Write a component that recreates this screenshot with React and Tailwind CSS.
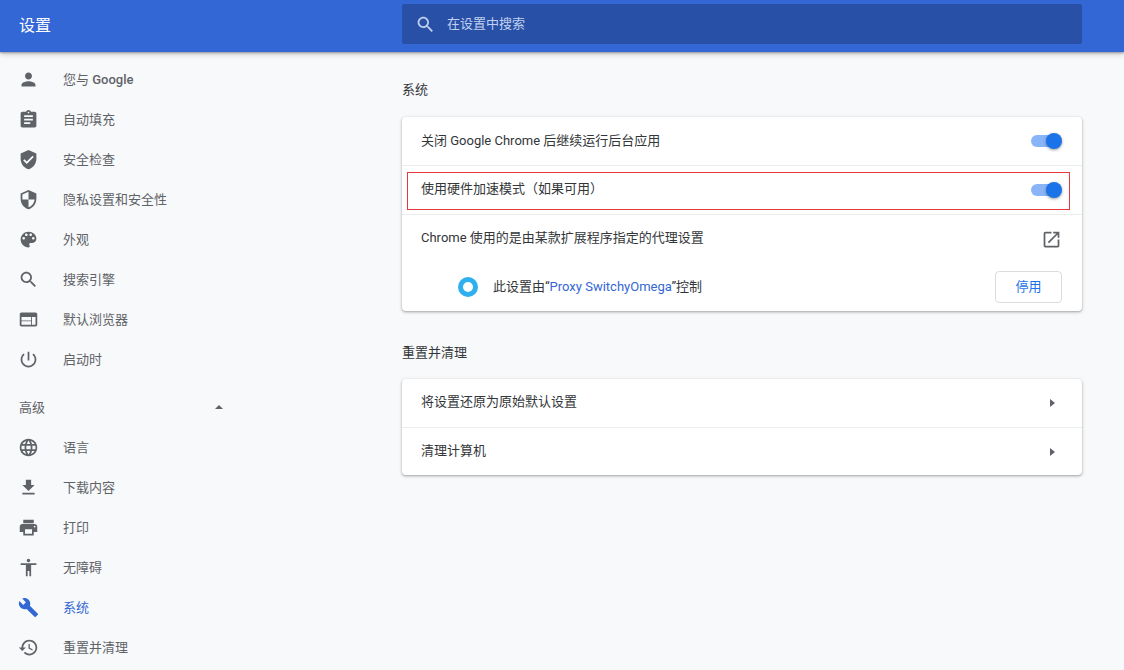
import React from "react";

const P = {
  person: "M12 12c2.21 0 4-1.79 4-4s-1.79-4-4-4-4 1.79-4 4 1.79 4 4 4zm0 2c-2.67 0-8 1.34-8 4v2h16v-2c0-2.66-5.33-4-8-4z",
  assignment: "M19 3h-4.18C14.4 1.84 13.3 1 12 1c-1.3 0-2.4.84-2.82 2H5c-1.1 0-2 .9-2 2v14c0 1.1.9 2 2 2h14c1.1 0 2-.9 2-2V5c0-1.1-.9-2-2-2zm-7 0c.55 0 1 .45 1 1s-.45 1-1 1-1-.45-1-1 .45-1 1-1zm2 14H7v-2h7v2zm3-4H7v-2h10v2zm0-4H7V7h10v2z",
  verified: "M12 1L3 5v6c0 5.55 3.84 10.74 9 12 5.16-1.26 9-6.45 9-12V5l-9-4zm-2 16l-4-4 1.41-1.41L10 14.17l6.59-6.59L18 9l-8 8z",
  security: "M12 1L3 5v6c0 5.55 3.84 10.74 9 12 5.16-1.26 9-6.45 9-12V5l-9-4zm0 10.99h7c-.53 4.12-3.28 7.79-7 8.94V12H5V6.3l7-3.11v8.8z",
  palette: "M12 3c-4.97 0-9 4.03-9 9s4.03 9 9 9c.83 0 1.5-.67 1.5-1.5 0-.39-.15-.74-.39-1.01-.23-.26-.38-.61-.38-.99 0-.83.67-1.5 1.5-1.5H16c2.76 0 5-2.24 5-5 0-4.42-4.03-8-9-8zm-5.5 9c-.83 0-1.5-.67-1.5-1.5S5.67 9 6.5 9 8 9.67 8 10.5 7.33 12 6.5 12zm3-4C8.67 8 8 7.33 8 6.5S8.67 5 9.5 5s1.5.67 1.5 1.5S10.33 8 9.5 8zm5 0c-.83 0-1.5-.67-1.5-1.5S13.67 5 14.5 5s1.5.67 1.5 1.5S15.33 8 14.5 8zm3 4c-.83 0-1.5-.67-1.5-1.5S16.67 9 17.5 9s1.5.67 1.5 1.5-.67 1.5-1.5 1.5z",
  search: "M15.5 14h-.79l-.28-.27C15.41 12.59 16 11.11 16 9.5 16 5.91 13.09 3 9.5 3S3 5.91 3 9.5 5.91 16 9.5 16c1.61 0 3.09-.59 4.23-1.57l.27.28v.79l5 4.99L20.49 19l-4.99-5zm-6 0C7.01 14 5 11.99 5 9.5S7.01 5 9.5 5 14 7.01 14 9.5 11.99 14 9.5 14z",
  web: "M20 4H4c-1.1 0-1.99.9-1.99 2L2 18c0 1.1.9 2 2 2h16c1.1 0 2-.9 2-2V6c0-1.1-.9-2-2-2zm-5 14H4v-4h11v4zm0-5H4V9h11v4zm5 5h-4V9h4v9z",
  power: "M13 3h-2v10h2V3zm4.83 2.17l-1.42 1.42C17.99 7.86 19 9.81 19 12c0 3.87-3.13 7-7 7s-7-3.13-7-7c0-2.19 1.01-4.14 2.58-5.42L6.17 5.17C4.23 6.82 3 9.26 3 12c0 4.97 4.03 9 9 9s9-4.03 9-9c0-2.74-1.23-5.18-3.17-6.83z",
  language: "M11.99 2C6.47 2 2 6.48 2 12s4.47 10 9.99 10C17.52 22 22 17.52 22 12S17.52 2 11.99 2zm6.93 6h-2.95c-.32-1.25-.78-2.45-1.38-3.56 1.84.63 3.37 1.91 4.33 3.56zM12 4.04c.83 1.2 1.48 2.53 1.91 3.96h-3.82c.43-1.43 1.08-2.76 1.91-3.96zM4.26 14C4.1 13.36 4 12.69 4 12s.1-1.36.26-2h3.38c-.08.66-.14 1.32-.14 2 0 .68.06 1.34.14 2H4.26zm.82 2h2.95c.32 1.25.78 2.45 1.38 3.56-1.84-.63-3.37-1.9-4.33-3.56zm2.95-8H5.08c.96-1.66 2.49-2.93 4.33-3.56C8.81 5.55 8.35 6.75 8.03 8zM12 19.96c-.83-1.2-1.48-2.53-1.91-3.96h3.82c-.43 1.43-1.08 2.76-1.91 3.96zM14.34 14H9.66c-.09-.66-.16-1.32-.16-2 0-.68.07-1.35.16-2h4.68c.09.65.16 1.32.16 2 0 .68-.07 1.34-.16 2zm.25 5.56c.6-1.11 1.06-2.31 1.38-3.56h2.95c-.96 1.65-2.49 2.93-4.33 3.56zM16.36 14c.08-.66.14-1.32.14-2 0-.68-.06-1.34-.14-2h3.38c.16.64.26 1.31.26 2s-.1 1.36-.26 2h-3.38z",
  download: "M19 9h-4V3H9v6H5l7 7 7-7zM5 18v2h14v-2H5z",
  print: "M19 8H5c-1.66 0-3 1.34-3 3v6h4v4h12v-4h4v-6c0-1.66-1.34-3-3-3zm-3 11H8v-5h8v5zm3-7c-.55 0-1-.45-1-1s.45-1 1-1 1 .45 1 1-.45 1-1 1zm-1-9H6v4h12V3z",
  access: "M12 2c1.1 0 2 .9 2 2s-.9 2-2 2-2-.9-2-2 .9-2 2-2zm9 7h-6v13h-2v-6h-2v6H9V9H3V7h18v2z",
  build: "M22.7 19l-9.1-9.1c.9-2.3.4-5-1.5-6.9-2-2-5-2.4-7.4-1.3L9 6 6 9 1.6 4.7C.4 7.1.9 10.1 2.9 12.1c1.9 1.9 4.6 2.4 6.9 1.5l9.1 9.1c.4.4 1 .4 1.4 0l2.3-2.3c.5-.4.5-1.1.1-1.4z",
  restore: "M13 3c-4.97 0-9 4.03-9 9H1l3.89 3.89.07.14L9 12H6c0-3.87 3.13-7 7-7s7 3.13 7 7-3.13 7-7 7c-1.93 0-3.68-.79-4.94-2.06l-1.42 1.42C8.27 19.99 10.51 21 13 21c4.97 0 9-4.03 9-9s-4.03-9-9-9zm-1 5v5l4.28 2.54.72-1.21-3.5-2.08V8H12z",
  open: "M19 19H5V5h7V3H5c-1.11 0-2 .9-2 2v14c0 1.1.89 2 2 2h14c1.1 0 2-.9 2-2v-7h-2v7zM14 3v2h3.59l-9.83 9.83 1.41 1.41L19 6.41V10h2V3h-7z",
};

function Icon({ d, className }) {
  return (
    <svg viewBox="0 0 24 24" className={className} fill="currentColor">
      <path d={d} />
    </svg>
  );
}

function NavItem({ icon, label, active }) {
  return (
    <div className={`flex h-10 items-center pl-[18px] ${active ? "text-[#3367d6]" : "text-[#5f6368]"}`}>
      <Icon d={icon} className="h-[21px] w-[21px] shrink-0" />
      <span className="ml-6 mt-[1px] text-[13px]">{label}</span>
    </div>
  );
}

function Toggle() {
  return (
    <div className="relative h-3 w-7 rounded-full bg-[#8ab4f8]">
      <div className="absolute -top-[2px] left-[15px] h-4 w-4 rounded-full bg-[#1a73e8] shadow-[0_1px_3px_rgba(0,0,0,0.4)]" />
    </div>
  );
}

function Row({ children, className }) {
  return (
    <div className={`relative flex items-center justify-between pl-[19px] text-[13px] text-[#333639] ${className}`}>
      {children}
    </div>
  );
}

function Arrow() {
  return <div className="mr-[27px] h-0 w-0 border-y-[4px] border-l-[5px] border-y-transparent border-l-[#5f6368]" />;
}

export default function App() {
  return (
    <div className="flex h-[670px] flex-col overflow-hidden bg-[#f8f9fa] font-['Roboto','Noto_Sans_CJK_SC',sans-serif]">
      <header className="relative z-10 flex h-[52px] shrink-0 items-center bg-[#3367d6] shadow-[0_1px_2px_rgba(0,0,0,0.3),0_2px_6px_rgba(0,0,0,0.2)]">
        <div className="w-[402px] shrink-0 pl-[19px] text-base text-white">设置</div>
        <div className="mb-1 flex h-10 w-[680px] items-center rounded-[2px] bg-[#2850a7] pl-[13px] text-[13px] text-[#c0d0ee]">
          <Icon d={P.search} className="h-[21px] w-[21px]" />
          <span className="ml-[11px]">在设置中搜索</span>
        </div>
      </header>
      <div className="flex min-h-0 flex-1">
        <nav className="w-[402px] shrink-0 pt-[7px]">
          <NavItem icon={P.person} label={<>您与 <span className="font-medium">Google</span></>} />
          <NavItem icon={P.assignment} label="自动填充" />
          <NavItem icon={P.verified} label="安全检查" />
          <NavItem icon={P.security} label="隐私设置和安全性" />
          <NavItem icon={P.palette} label="外观" />
          <NavItem icon={P.search} label="搜索引擎" />
          <NavItem icon={P.web} label="默认浏览器" />
          <NavItem icon={P.power} label="启动时" />
          <div className="mt-2 flex h-10 w-[223px] items-center justify-between pl-[19px] text-[13px] text-[#5f6368]">
            <span className="mt-[1px]">高级</span>
            <div className="h-0 w-0 border-x-[4px] border-b-[4px] border-x-transparent border-b-[#5f6368]" />
          </div>
          <NavItem icon={P.language} label="语言" />
          <NavItem icon={P.download} label="下载内容" />
          <NavItem icon={P.print} label="打印" />
          <NavItem icon={P.access} label="无障碍" />
          <NavItem icon={P.build} label="系统" active />
          <NavItem icon={P.restore} label="重置并清理" />
        </nav>
        <main className="w-[680px]">
          <h2 className="mt-[29px] text-[13px] leading-[18px] font-normal text-[#333639]">系统</h2>
          <section className="mt-[18px] rounded bg-white shadow-[0_1px_2px_rgba(60,64,67,0.3),0_1px_3px_1px_rgba(60,64,67,0.15)]">
            <Row className="h-12">
              <span>关闭 Google Chrome 后继续运行后台应用</span>
              <div className="mr-[23px]"><Toggle /></div>
            </Row>
            <Row className="h-[49px] border-t border-[#eceded]">
              <span className="mb-[2px]">使用硬件加速模式（如果可用）</span>
              <div className="mr-[23px]"><Toggle /></div>
              <div className="absolute left-[5px] top-[6px] h-[38px] w-[663px] border border-[#e8383d]" />
            </Row>
            <Row className="h-[49px] border-t border-[#eceded]">
              <span className="mb-[2px]">Chrome 使用的是由某款扩展程序指定的代理设置</span>
              <Icon d={P.open} className="mr-[20px] h-[21px] w-[21px] text-[#5f6368]" />
            </Row>
            <div className="flex h-12 items-center justify-between pl-[56px] text-[13px] text-[#333639]">
              <div className="flex items-center">
                <div className="box-border h-5 w-5 rounded-full border-[5px] border-[#2fb0ee] bg-white" />
                <span className="ml-[15px]">此设置由“<span className="text-[#3367d6]">Proxy SwitchyOmega</span>”控制</span>
              </div>
              <button className="mr-5 h-8 w-[67px] rounded border border-[#dadce0] bg-white text-[13px] text-[#1a73e8]">停用</button>
            </div>
          </section>
          <h2 className="mt-[33px] text-[13px] leading-[18px] font-normal text-[#333639]">重置并清理</h2>
          <section className="mt-[17px] rounded bg-white shadow-[0_1px_2px_rgba(60,64,67,0.3),0_1px_3px_1px_rgba(60,64,67,0.15)]">
            <Row className="h-12">
              <span className="mb-[2px]">将设置还原为原始默认设置</span>
              <Arrow />
            </Row>
            <Row className="h-12 border-t border-[#eceded]">
              <span className="mb-[2px]">清理计算机</span>
              <Arrow />
            </Row>
          </section>
        </main>
      </div>
    </div>
  );
}
